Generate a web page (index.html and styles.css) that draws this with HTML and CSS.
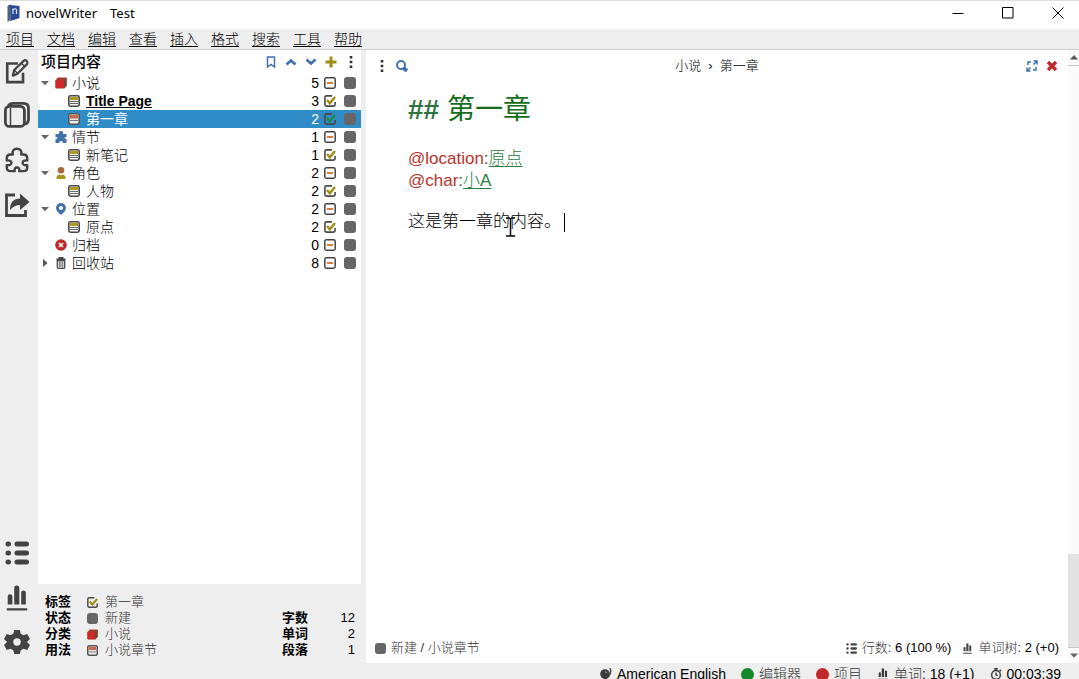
FILE: index.html
```html
<!DOCTYPE html>
<html lang="zh-CN">
<head>
<meta charset="utf-8">
<title>novelWriter - Test</title>
<link rel="stylesheet" href="styles.css">
</head>
<body>
<svg class="sprite" aria-hidden="true">
  <symbol id="edit" viewBox="0 0 26 28"><path d="M14 6H2.500V26H19.500V16" fill="none" stroke="currentColor" stroke-width="2.800"/><path d="M8.500 19l1.500-6L20.500 2.800q1.500-1 3 .5t.5 3L13.500 17z" fill="none" stroke="currentColor" stroke-width="2.400" stroke-linejoin="round"/><path d="M18 6l3.500 3.500M10 13l4 4" stroke="currentColor" stroke-width="1.500"/></symbol>
  <symbol id="book" viewBox="0 0 26 26"><rect x="1.400" y="4.400" width="19" height="20" rx="4" fill="none" stroke="currentColor" stroke-width="2.800"/><path d="M4 4q2-2.600 5-2.600h10.500q5 0 5 5v11q0 3-3.500 5" fill="none" stroke="currentColor" stroke-width="2.800"/><path d="M6.500 6v17" stroke="currentColor" stroke-width="1.500"/></symbol>
  <symbol id="puzzle" viewBox="0 0 26 28"><path d="M6 8h2.500C7.500 3.500 10 1.800 13 1.800s5.500 1.700 4.500 6.200H20q4 0 4 4v2.500q-5-.500-5 2.500t5 2.500V22q0 4-4 4h-4.500q.5-4-2.500-4t-2.500 4H6q-4 0-4-4v-2.500q5 .5 5-2.500t-5-2.500V12q0-4 4-4z" fill="none" stroke="currentColor" stroke-width="2.600" stroke-linejoin="round"/></symbol>
  <symbol id="share" viewBox="0 0 26 26"><path d="M11 3H2.500v20.500h19V18" fill="none" stroke="currentColor" stroke-width="2.800"/><path d="M6 18C6 10 10 6.500 16 6.500V1.500L25.500 10 16 18v-5c-4 0-7 1.500-10 5z" fill="currentColor"/></symbol>
  <symbol id="list" viewBox="0 0 24 24"><g stroke="currentColor" stroke-width="5" stroke-linecap="round"><path d="M3 3h.500M3 12h.500M3 21h.500M12 3h9.500M12 12h9.500M12 21h9.500"/></g></symbol>
  <symbol id="bars" viewBox="0 0 24 28"><path d="M2 21v-9q0-2 2.500-2T7 12v9zM9 21V3q0-2.500 2.700-2.500T14.500 3v18zM16.500 21V8q0-2 2.500-2t2.500 2v13zM1 25h22v2.500H1z" fill="currentColor"/></symbol>
  <symbol id="gear" viewBox="0 0 28 28"><path fill="currentColor" fill-rule="evenodd" d="M11 1h6l1 4 3 1.700 4-1.200 3 5.200-3 3v.6l3 3-3 5.200-4-1.200L18 23l-1 4h-6l-1-4-3-1.700-4 1.200L0 17.300l3-3v-.6l-3-3 3-5.200 4 1.200L10 5zM14 10a4 4 0 1 0 0 8 4 4 0 0 0 0-8z"/></symbol>
  <symbol id="cube" viewBox="0 0 12 12"><path d="M3 .500h8l.700 1v7l-2.500 3H1l-.700-1v-7z" fill="#a33c2c"/><path d="M.800 3.500h8v7.500h-8z" fill="#d02828"/><path d="M9 3.500l2.500-3V8.500L9 11.500z" fill="#6d4a34"/></symbol>
  <symbol id="note" viewBox="0 0 12 12"><rect x=".8" y=".8" width="10.400" height="10.400" rx="1.600" fill="#f5f5f5" stroke="#494949" stroke-width="1.600"/><path d="M2 2h8v3H2z" fill="#b29a20"/><path d="M2 6.500h8M2 8.500h8" stroke="#666"/></symbol>
  <symbol id="chapter" viewBox="0 0 12 12"><rect x=".8" y=".8" width="10.400" height="10.400" rx="1.600" fill="#e9e9e9" stroke="#555" stroke-width="1.600"/><path d="M2 2h8v3.500H2z" fill="#c8664e"/><path d="M2 7.500h8" stroke="#777"/></symbol>
  <symbol id="plot" viewBox="0 0 12 12"><path d="M4 3q-.5-3 2-3t2 3h3.500v3q-2.500 0-2 1t2 1V12H8q0-2-2-2t-2 2H.500V8q2 0 2-1t-2-1V3z" fill="#4271ae"/></symbol>
  <symbol id="person" viewBox="0 0 12 12"><circle cx="6" cy="3.300" r="3.300" fill="#a8673f"/><path d="M1.500 12q-.5-4 3-4.500l1.500.8 1.500-.8q3.500.5 3 4.500z" fill="#a89322"/></symbol>
  <symbol id="pin" viewBox="0 0 12 12"><path fill="#4271ae" fill-rule="evenodd" d="M6 0a5 5 0 0 1 5 5q0 3-5 7-5-4-5-7a5 5 0 0 1 5-5zm0 3a2 2 0 1 0 0 4 2 2 0 0 0 0-4z"/></symbol>
  <symbol id="cancel" viewBox="0 0 12 12"><circle cx="6" cy="6" r="5.800" fill="#c0292b"/><path d="M4 4l4 4M8 4L4 8" stroke="#fff" stroke-width="1.700"/></symbol>
  <symbol id="trash" viewBox="0 0 12 13"><path d="M1 2.500h10M4 2V.800h4V2" fill="none" stroke="#494949" stroke-width="1.500"/><path d="M2 4v7q0 1.300 1.300 1.300h5.400q1.300 0 1.300-1.300V4z" fill="#ddd" stroke="#494949" stroke-width="1.400"/><path d="M4.700 5v6M7.300 5v6" stroke="#494949"/></symbol>
  <symbol id="minus" viewBox="0 0 12 12"><rect x=".8" y=".8" width="10.400" height="10.400" rx="1.600" fill="#fff" stroke="#444" stroke-width="1.500"/><path d="M3 6h6" stroke="#e07b39" stroke-width="2"/></symbol>
  <symbol id="check" viewBox="0 0 12 12"><path d="M8 .900H2.500Q.9.900.9 2.500v7q0 1.600 1.600 1.600h7q1.600 0 1.600-1.600V7" fill="none" stroke="#494949" stroke-width="1.600"/><path d="M3 5l2.800 3.300L11 2" fill="none" stroke="currentColor" stroke-width="2.400"/></symbol>
  <symbol id="down" viewBox="0 0 8 5"><path d="M0 .500h8L4 4.800z" fill="#666"/></symbol>
  <symbol id="right" viewBox="0 0 5 8"><path d="M.500 0L5 4 .500 8z" fill="#555"/></symbol>
  <symbol id="dots" viewBox="0 0 4 12"><path d="M.700 0h2.600v2.600H.700zM.700 4.700h2.600v2.600H.700zM.700 9.400h2.600V12H.700z" fill="#333"/></symbol>
</svg>

<div class="app">
  <header class="titlebar">
    <svg class="logo" viewBox="0 0 14 18"><path d="M1 2L4 0v16l-3 2z" fill="#555f78"/><path d="M3.500 1L13 2v12L4 17z" fill="#2b4a93"/><path d="M6.500 10V4.500M6.500 6q3-2.500 3.500 0v4" fill="none" stroke="#dfe8fa" stroke-width="1.200"/></svg>
    <h1 class="window-title"><span>novelWriter</span><span>Test</span></h1>
    <div class="window-controls">
      <button aria-label="最小化"><svg viewBox="0 0 12 12"><path d="M.500 6.500h11" stroke="#000"/></svg></button>
      <button aria-label="最大化"><svg viewBox="0 0 12 12"><path d="M.500.500h10.500v10.500H.500z" fill="none" stroke="#000"/></svg></button>
      <button aria-label="关闭"><svg viewBox="0 0 12 12"><path d="M.500.500l11 11M11.500.500l-11 11" stroke="#000"/></svg></button>
    </div>
  </header>

  <nav class="menubar">
    <button>项目</button><button>文档</button><button>编辑</button><button>查看</button><button>插入</button><button>格式</button><button>搜索</button><button>工具</button><button>帮助</button>
  </nav>

  <div class="workspace">
    <aside class="rail">
      <button aria-label="编辑"><svg><use href="#edit"/></svg></button>
      <button aria-label="小说"><svg><use href="#book"/></svg></button>
      <button aria-label="大纲"><svg><use href="#puzzle"/></svg></button>
      <button aria-label="导出"><svg><use href="#share"/></svg></button>
      <span class="spacer"></span>
      <button aria-label="详情"><svg class="list-icon"><use href="#list"/></svg></button>
      <button aria-label="统计"><svg><use href="#bars"/></svg></button>
      <button aria-label="设置"><svg><use href="#gear"/></svg></button>
    </aside>

    <section class="project">
      <div class="project-tree">
        <div class="project-head">
          <h2>项目内容</h2>
          <div class="tools">
            <button aria-label="书签"><svg viewBox="0 0 12 12"><path d="M2.500 11V1h7v10L6 8.500z" fill="none" stroke="#4271ae" stroke-width="1.500"/></svg></button>
            <button aria-label="上移"><svg viewBox="0 0 12 12"><path d="M1.500 8.500L6 4.500l4.500 4" fill="none" stroke="#4271ae" stroke-width="2.800"/></svg></button>
            <button aria-label="下移"><svg viewBox="0 0 12 12"><path d="M1.500 3.500L6 7.500l4.500-4" fill="none" stroke="#4271ae" stroke-width="2.800"/></svg></button>
            <button aria-label="添加"><svg viewBox="0 0 12 12"><path d="M6 .500v11M.500 6h11" stroke="#a08c14" stroke-width="3"/></svg></button>
            <button aria-label="更多"><svg><use href="#dots"/></svg></button>
          </div>
        </div>
        <ul class="tree">
          <li class="row"><svg class="arrow"><use href="#down"/></svg><svg class="icon"><use href="#cube"/></svg><span class="name">小说</span><span class="count">5</span><svg class="icon"><use href="#minus"/></svg><i class="state"></i></li>
          <li class="row child"><svg class="icon"><use href="#note"/></svg><span class="name title-page">Title Page</span><span class="count">3</span><svg class="icon active"><use href="#check"/></svg><i class="state"></i></li>
          <li class="row child selected"><svg class="icon"><use href="#chapter"/></svg><span class="name">第一章</span><span class="count">2</span><svg class="icon active"><use href="#check"/></svg><i class="state"></i></li>
          <li class="row"><svg class="arrow"><use href="#down"/></svg><svg class="icon"><use href="#plot"/></svg><span class="name">情节</span><span class="count">1</span><svg class="icon"><use href="#minus"/></svg><i class="state"></i></li>
          <li class="row child"><svg class="icon"><use href="#note"/></svg><span class="name">新笔记</span><span class="count">1</span><svg class="icon active"><use href="#check"/></svg><i class="state"></i></li>
          <li class="row"><svg class="arrow"><use href="#down"/></svg><svg class="icon"><use href="#person"/></svg><span class="name">角色</span><span class="count">2</span><svg class="icon"><use href="#minus"/></svg><i class="state"></i></li>
          <li class="row child"><svg class="icon"><use href="#note"/></svg><span class="name">人物</span><span class="count">2</span><svg class="icon active"><use href="#check"/></svg><i class="state"></i></li>
          <li class="row"><svg class="arrow"><use href="#down"/></svg><svg class="icon"><use href="#pin"/></svg><span class="name">位置</span><span class="count">2</span><svg class="icon"><use href="#minus"/></svg><i class="state"></i></li>
          <li class="row child"><svg class="icon"><use href="#note"/></svg><span class="name">原点</span><span class="count">2</span><svg class="icon active"><use href="#check"/></svg><i class="state"></i></li>
          <li class="row"><span class="arrow"></span><svg class="icon"><use href="#cancel"/></svg><span class="name">归档</span><span class="count">0</span><svg class="icon"><use href="#minus"/></svg><i class="state"></i></li>
          <li class="row"><svg class="arrow"><use href="#right"/></svg><svg class="icon"><use href="#trash"/></svg><span class="name">回收站</span><span class="count">8</span><svg class="icon"><use href="#minus"/></svg><i class="state"></i></li>
        </ul>
      </div>
      <div class="details">
        <b>标签</b><svg class="small active"><use href="#check"/></svg><span class="value">第一章</span><b></b><span></span>
        <b>状态</b><i class="state small"></i><span class="value">新建</span><b>字数</b><span class="number">12</span>
        <b>分类</b><svg class="small"><use href="#cube"/></svg><span class="value">小说</span><b>单词</b><span class="number">2</span>
        <b>用法</b><svg class="small"><use href="#chapter"/></svg><span class="value">小说章节</span><b>段落</b><span class="number">1</span>
      </div>
    </section>

    <div class="splitter"></div>

    <main class="editor">
      <div class="document">
        <div class="doc-head">
          <div class="doc-tools">
            <button aria-label="菜单"><svg><use href="#dots"/></svg></button>
            <button aria-label="搜索"><svg viewBox="0 0 12 12"><circle cx="5" cy="5" r="4" fill="none" stroke="#4271ae" stroke-width="1.900"/><path d="M7.500 8l3.500 3" stroke="#4271ae" stroke-width="3.800"/></svg></button>
          </div>
          <div class="crumbs"><span>小说</span><span>›</span><span>第一章</span></div>
          <div class="doc-tools end">
            <button aria-label="专注模式"><svg viewBox="0 0 12 12"><path d="M7.500 1H11v3.500M4.500 11H1V7.500M11 1L7.500 4.500M1 11l3.500-3.500M5 2H2v3M10 7v3H7" fill="none" stroke="#4271ae" stroke-width="1.500"/></svg></button>
            <button aria-label="关闭文档"><svg viewBox="0 0 12 12"><path d="M2 2l8 8M10 2l-8 8" stroke="#c0292b" stroke-width="3.400"/></svg></button>
          </div>
        </div>
        <article class="text">
          <h2><b>##</b> 第一章</h2>
          <p class="tag">@location<span>:</span><a href="#location">原点</a></p>
          <p class="tag">@char<span>:</span><a href="#char">小A</a></p>
          <p class="body">这是第一章的内容。<span class="caret"></span></p>
          <svg class="pointer" viewBox="0 0 11 20"><path d="M1 1h4M6 1h4M5.500 1v18M1 19h9" fill="none" stroke="#000" stroke-width="1.500"/></svg>
        </article>
        <div class="doc-foot">
          <i class="state small"></i><span class="muted">新建 / 小说章节</span>
          <span class="spacer"></span>
          <svg class="small"><use href="#list"/></svg><span class="stat"><span class="muted">行数:</span> 6 (100 %)</span>
          <svg class="small"><use href="#bars"/></svg><span><span class="muted">单词树:</span> 2 (+0)</span>
        </div>
      </div>
      <div class="scrollbar">
        <button aria-label="向上滚动"><svg viewBox="0 0 8 5"><path d="M0 4.500h8L4 0z" fill="#555"/></svg></button>
        <div class="track"><div class="thumb"></div></div>
        <button aria-label="向下滚动"><svg><use href="#down"/></svg></button>
      </div>
    </main>
  </div>

  <footer class="status">
    <span class="item"><svg viewBox="0 0 12 12"><circle cx="5" cy="6" r="4.800" fill="#3c3c3c"/><path d="M10 0q2 5-1.500 8.500T2 11.500" fill="none" stroke="#3c3c3c" stroke-width="1.300"/><path d="M5 3.500l2 1.500" stroke="#aaa"/></svg>American English</span>
    <span class="item"><i class="dot green"></i><span class="muted">编辑器</span></span>
    <span class="item"><i class="dot red"></i><span class="muted">项目</span></span>
    <span class="item"><svg><use href="#bars"/></svg><span><span class="muted">单词:</span> 18 (+1)</span></span>
    <span class="item"><svg viewBox="0 0 12 13"><circle cx="6" cy="7.500" r="4.700" fill="none" stroke="#3c3c3c" stroke-width="1.600"/><path d="M4 .800h4M6 1v2M10 2l1.500 1.500M6 8V5M6 8h2" fill="none" stroke="#3c3c3c" stroke-width="1.500"/></svg>00:03:39</span>
  </footer>
</div>
</body>
</html>
```
FILE: styles.css
```css
* { box-sizing: border-box; }
body {
  margin: 0;
  background: #eee;
  color: #000;
  font: 14px/18px "Liberation Sans", "Noto Sans CJK SC", sans-serif;
}
h1, h2, p, ul { margin: 0; padding: 0; }
ul { list-style: none; }
button {
  display: flex;
  align-items: center;
  justify-content: center;
  padding: 0;
  border: 0;
  background: none;
  color: inherit;
  font: inherit;
}
svg { display: block; flex: none; }
.sprite { position: absolute; width: 0; height: 0; }
.spacer { flex: 1; }

.app { display: flex; flex-direction: column; height: 100vh; overflow: hidden; }

.titlebar {
  display: flex;
  align-items: center;
  height: 29px;
  padding: 0 0 4px 6px;
  border-top: 1px solid #dcdfe2;
  background: #fff;
}
.logo { width: 15px; height: 18px; margin-right: 5px; }
.window-title {
  display: flex;
  flex: 1;
  gap: 13px;
  font: 13px/18px "Noto Sans", sans-serif;
}
.window-controls { display: flex; gap: 8px; }
.window-controls button { width: 42px; height: 24px; }
.window-controls svg { width: 12px; height: 12px; }

.menubar {
  display: flex;
  gap: 13px;
  height: 21px;
  padding-left: 6px;
  border-bottom: 1px solid #cfcfcf;
}
.menubar button { font-weight: 300; text-decoration: underline; text-underline-offset: 2px; }

.workspace { display: flex; flex: 1; min-height: 0; }

.rail {
  display: flex;
  flex-direction: column;
  width: 38px;
  padding-right: 4px;
  color: #434343;
}
.rail button { height: 45px; }
.rail button:first-child { height: 42px; }
.rail button:last-child { height: 43px; }
.rail svg { width: 26px; height: 26px; }
.rail .list-icon { width: 24px; height: 24px; }

.project { display: flex; flex-direction: column; width: 323px; }
.project-tree { flex: 1; background: #fff; }
.project-head {
  display: flex;
  justify-content: space-between;
  align-items: center;
  height: 24px;
  padding-left: 3px;
}
.project-head h2 { font-size: 15px; line-height: 22px; font-weight: 500; }
.tools { display: flex; }
.tools button { width: 20px; height: 20px; }
.tools svg { width: 12px; height: 12px; }

.row {
  display: flex;
  align-items: center;
  height: 18px;
  padding: 0 5px 0 3px;
}
.child { padding-left: 30px; }
.arrow { width: 8px; height: 8px; margin-right: 6px; }
.icon { width: 12px; height: 12px; color: #a08c14; }
.name { flex: 1; margin-left: 5px; font-weight: 300; }
.child .name { margin-left: 6px; }
.count { margin-right: 5px; }
.state {
  width: 12px;
  height: 12px;
  margin-left: 8px;
  border-radius: 3px;
  background: #666;
}
.active { color: #a08c14; }
.title-page { font-weight: 700; text-decoration: underline; }
.selected { background: #308cc6; color: #fff; }
.selected .active { color: #218a50; }
.selected .name { font-weight: 400; }

.details {
  display: grid;
  grid-template-columns: 42px 18px 1fr 40px 33px;
  align-items: center;
  padding: 10px 6px 5px 7px;
  font-size: 13px;
  line-height: 16px;
}
.small { width: 11px; height: 11px; margin: 0; }
.details b { height: 16px; }
.value, .muted { color: #333; font-weight: 300; }
.number { text-align: right; }

.splitter { width: 5px; }

.editor { display: flex; flex: 1; min-width: 0; background: #fff; }
.document { display: flex; flex: 1; flex-direction: column; }
.doc-head {
  display: grid;
  grid-template-columns: 1fr auto 1fr;
  align-items: center;
  height: 31px;
  padding: 0 6px;
  font-size: 13px;
}
.doc-tools { display: flex; }
.doc-tools button { width: 20px; height: 20px; }
.doc-tools svg { width: 12px; height: 12px; }
.end { justify-content: flex-end; }
.crumbs { display: flex; gap: 7px; font-weight: 300; }

.text {
  position: relative;
  flex: 1;
  padding: 9px 42px;
  font-size: 17px;
  line-height: 22px;
}
.text h2 {
  margin-bottom: 18px;
  color: #156d1c;
  font-size: 28px;
  font-weight: 400;
  line-height: 40px;
}
.text h2 b { color: #2f7340; }
.tag { color: #b8322a; }
.tag span { color: #356b3c; }
.tag a { color: #2b7d3c; font-weight: 300; text-underline-offset: 2px; }
.body { display: flex; align-items: center; margin-top: 19px; font-weight: 300; }
.caret { width: 1px; height: 19px; margin-left: 3px; background: #000; }
.pointer { position: absolute; left: 139px; top: 136px; width: 11px; height: 20px; }

.doc-foot {
  display: flex;
  align-items: center;
  gap: 5px;
  height: 30px;
  padding: 0 9px;
  font-size: 13px;
}
.stat { margin-right: 6px; }
.doc-foot svg { color: #444; }

.scrollbar { display: flex; flex-direction: column; width: 11px; background: #fafafa; }
.scrollbar button { height: 15px; }
.scrollbar svg { width: 8px; height: 5px; }
.track {
  display: flex;
  flex: 1;
  flex-direction: column;
  justify-content: flex-end;
  border-top: 1px solid #c8c8c8;
  border-bottom: 1px solid #c8c8c8;
}
.thumb { height: 16%; background: #e2e2e2; }

.status {
  display: flex;
  justify-content: flex-end;
  gap: 15px;
  height: 16px;
  padding-right: 18px;
  line-height: 22px;
}
.item { display: flex; align-items: center; gap: 5px; height: 22px; white-space: nowrap; }
.item svg { width: 12px; height: 12px; color: #3c3c3c; }
.dot { width: 13px; height: 13px; border-radius: 50%; }
.green { background: #15882c; }
.red { background: #c0292b; }
```
